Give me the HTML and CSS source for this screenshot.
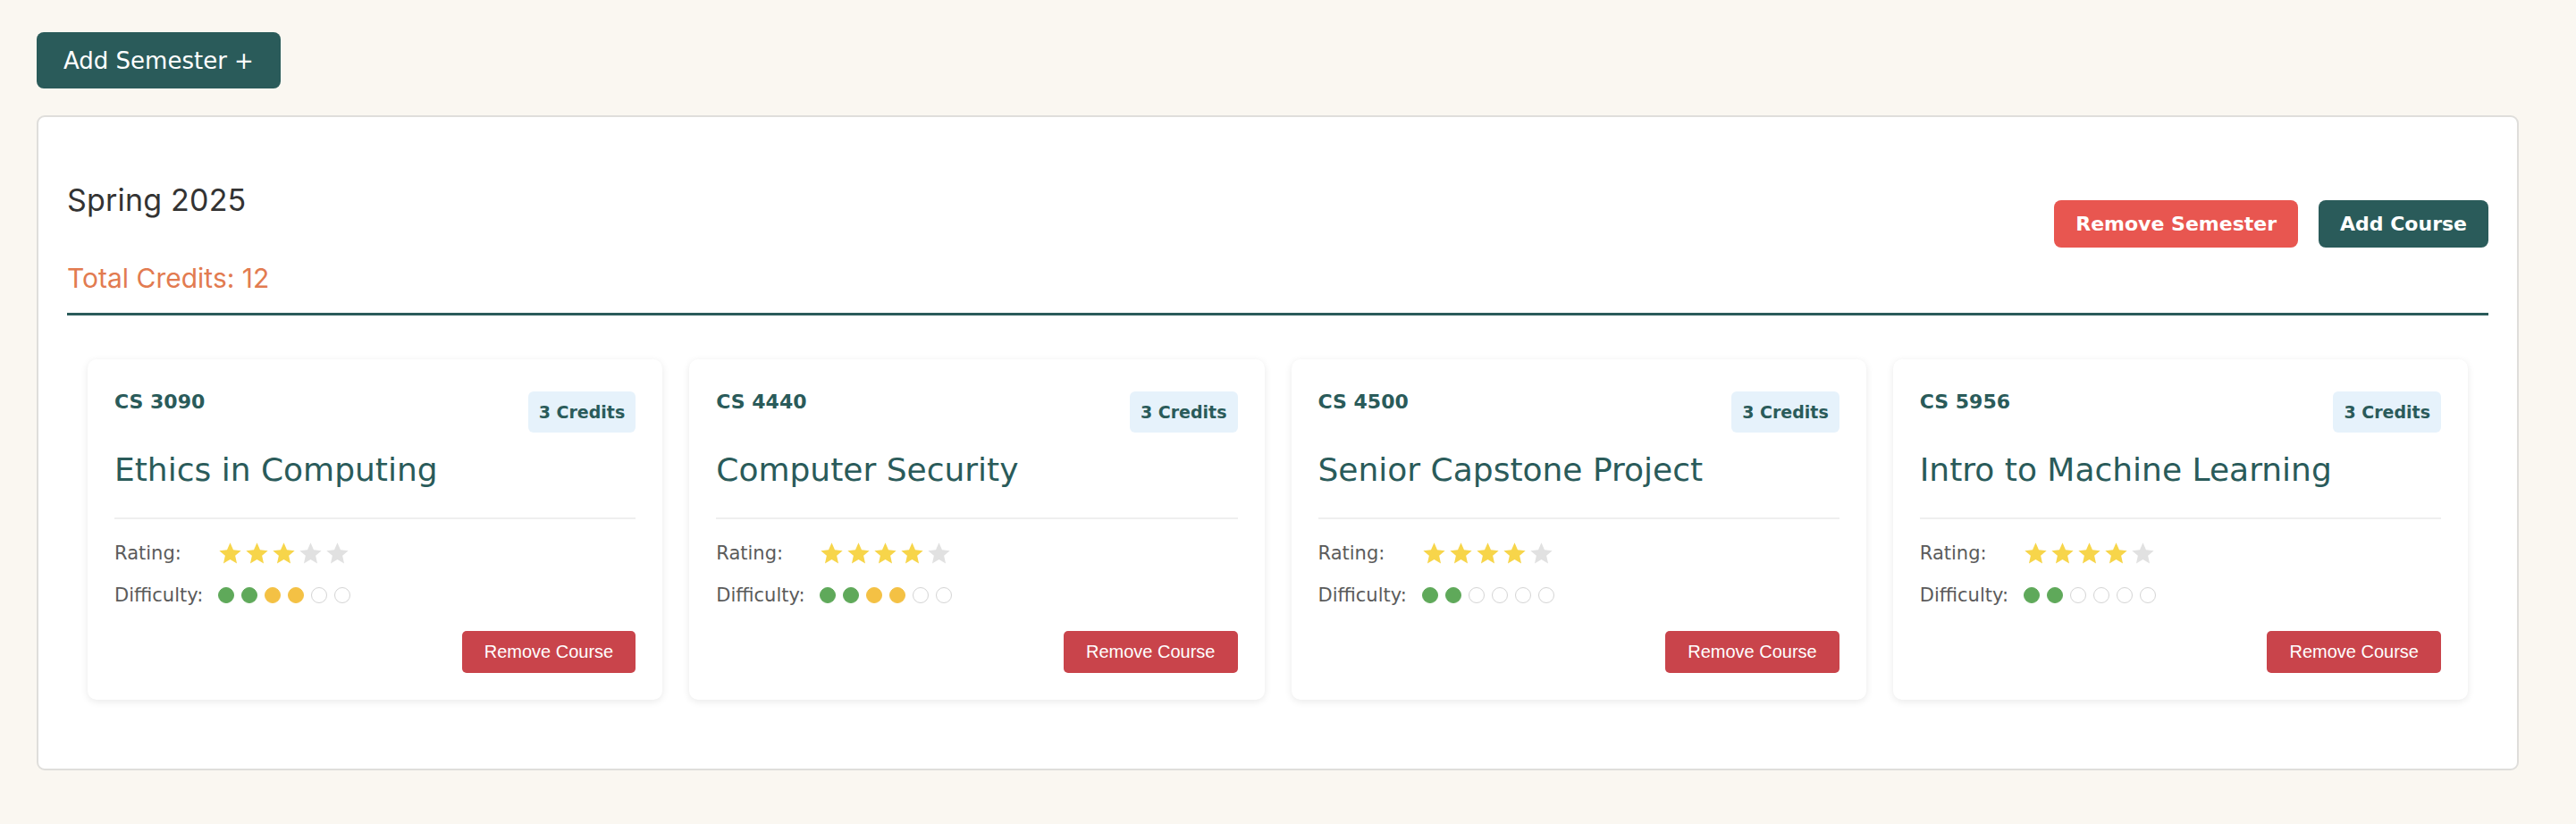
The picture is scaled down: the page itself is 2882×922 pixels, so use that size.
FILE: index.html
```html
<!DOCTYPE html>
<html lang="en">
<head>
<meta charset="utf-8">
<title>Semester Planner</title>
<link rel="stylesheet" href="styles.css">
</head>
<body>
<main class="page">
  <button class="btn-add-semester">Add Semester +</button>
  <section class="semester">
    <header class="semester-header">
      <div class="semester-info">
        <h2 class="semester-title">Spring 2025</h2>
        <p class="semester-credits">Total Credits: 12</p>
      </div>
      <div class="semester-actions">
        <button class="btn btn-danger">Remove Semester</button>
        <button class="btn btn-primary">Add Course</button>
      </div>
    </header>
    <div class="course-grid">
      <article class="course-card">
        <div class="course-head">
          <span class="course-code">CS 3090</span>
          <span class="course-badge">3 Credits</span>
        </div>
        <h3 class="course-title">Ethics in Computing</h3>
        <div class="course-meta">
          <div class="meta-row">
            <span class="meta-label">Rating:</span>
            <span class="stars">
              <svg class="star on" viewBox="0 0 24 24"><path d="M12 1.2l3.1 7.1 7.7.7-5.8 5.1 1.7 7.6L12 17.7l-6.7 4 1.7-7.6-5.8-5.1 7.7-.7z"/></svg>
              <svg class="star on" viewBox="0 0 24 24"><path d="M12 1.2l3.1 7.1 7.7.7-5.8 5.1 1.7 7.6L12 17.7l-6.7 4 1.7-7.6-5.8-5.1 7.7-.7z"/></svg>
              <svg class="star on" viewBox="0 0 24 24"><path d="M12 1.2l3.1 7.1 7.7.7-5.8 5.1 1.7 7.6L12 17.7l-6.7 4 1.7-7.6-5.8-5.1 7.7-.7z"/></svg>
              <svg class="star" viewBox="0 0 24 24"><path d="M12 1.2l3.1 7.1 7.7.7-5.8 5.1 1.7 7.6L12 17.7l-6.7 4 1.7-7.6-5.8-5.1 7.7-.7z"/></svg>
              <svg class="star" viewBox="0 0 24 24"><path d="M12 1.2l3.1 7.1 7.7.7-5.8 5.1 1.7 7.6L12 17.7l-6.7 4 1.7-7.6-5.8-5.1 7.7-.7z"/></svg>
            </span>
          </div>
          <div class="meta-row">
            <span class="meta-label">Difficulty:</span>
            <span class="dots">
              <i class="dot green"></i><i class="dot green"></i><i class="dot yellow"></i><i class="dot yellow"></i><i class="dot"></i><i class="dot"></i>
            </span>
          </div>
        </div>
        <div class="course-actions">
          <button class="btn-remove-course">Remove Course</button>
        </div>
      </article>

      <article class="course-card">
        <div class="course-head">
          <span class="course-code">CS 4440</span>
          <span class="course-badge">3 Credits</span>
        </div>
        <h3 class="course-title">Computer Security</h3>
        <div class="course-meta">
          <div class="meta-row">
            <span class="meta-label">Rating:</span>
            <span class="stars">
              <svg class="star on" viewBox="0 0 24 24"><path d="M12 1.2l3.1 7.1 7.7.7-5.8 5.1 1.7 7.6L12 17.7l-6.7 4 1.7-7.6-5.8-5.1 7.7-.7z"/></svg>
              <svg class="star on" viewBox="0 0 24 24"><path d="M12 1.2l3.1 7.1 7.7.7-5.8 5.1 1.7 7.6L12 17.7l-6.7 4 1.7-7.6-5.8-5.1 7.7-.7z"/></svg>
              <svg class="star on" viewBox="0 0 24 24"><path d="M12 1.2l3.1 7.1 7.7.7-5.8 5.1 1.7 7.6L12 17.7l-6.7 4 1.7-7.6-5.8-5.1 7.7-.7z"/></svg>
              <svg class="star on" viewBox="0 0 24 24"><path d="M12 1.2l3.1 7.1 7.7.7-5.8 5.1 1.7 7.6L12 17.7l-6.7 4 1.7-7.6-5.8-5.1 7.7-.7z"/></svg>
              <svg class="star" viewBox="0 0 24 24"><path d="M12 1.2l3.1 7.1 7.7.7-5.8 5.1 1.7 7.6L12 17.7l-6.7 4 1.7-7.6-5.8-5.1 7.7-.7z"/></svg>
            </span>
          </div>
          <div class="meta-row">
            <span class="meta-label">Difficulty:</span>
            <span class="dots">
              <i class="dot green"></i><i class="dot green"></i><i class="dot yellow"></i><i class="dot yellow"></i><i class="dot"></i><i class="dot"></i>
            </span>
          </div>
        </div>
        <div class="course-actions">
          <button class="btn-remove-course">Remove Course</button>
        </div>
      </article>

      <article class="course-card">
        <div class="course-head">
          <span class="course-code">CS 4500</span>
          <span class="course-badge">3 Credits</span>
        </div>
        <h3 class="course-title">Senior Capstone Project</h3>
        <div class="course-meta">
          <div class="meta-row">
            <span class="meta-label">Rating:</span>
            <span class="stars">
              <svg class="star on" viewBox="0 0 24 24"><path d="M12 1.2l3.1 7.1 7.7.7-5.8 5.1 1.7 7.6L12 17.7l-6.7 4 1.7-7.6-5.8-5.1 7.7-.7z"/></svg>
              <svg class="star on" viewBox="0 0 24 24"><path d="M12 1.2l3.1 7.1 7.7.7-5.8 5.1 1.7 7.6L12 17.7l-6.7 4 1.7-7.6-5.8-5.1 7.7-.7z"/></svg>
              <svg class="star on" viewBox="0 0 24 24"><path d="M12 1.2l3.1 7.1 7.7.7-5.8 5.1 1.7 7.6L12 17.7l-6.7 4 1.7-7.6-5.8-5.1 7.7-.7z"/></svg>
              <svg class="star on" viewBox="0 0 24 24"><path d="M12 1.2l3.1 7.1 7.7.7-5.8 5.1 1.7 7.6L12 17.7l-6.7 4 1.7-7.6-5.8-5.1 7.7-.7z"/></svg>
              <svg class="star" viewBox="0 0 24 24"><path d="M12 1.2l3.1 7.1 7.7.7-5.8 5.1 1.7 7.6L12 17.7l-6.7 4 1.7-7.6-5.8-5.1 7.7-.7z"/></svg>
            </span>
          </div>
          <div class="meta-row">
            <span class="meta-label">Difficulty:</span>
            <span class="dots">
              <i class="dot green"></i><i class="dot green"></i><i class="dot"></i><i class="dot"></i><i class="dot"></i><i class="dot"></i>
            </span>
          </div>
        </div>
        <div class="course-actions">
          <button class="btn-remove-course">Remove Course</button>
        </div>
      </article>

      <article class="course-card">
        <div class="course-head">
          <span class="course-code">CS 5956</span>
          <span class="course-badge">3 Credits</span>
        </div>
        <h3 class="course-title">Intro to Machine Learning</h3>
        <div class="course-meta">
          <div class="meta-row">
            <span class="meta-label">Rating:</span>
            <span class="stars">
              <svg class="star on" viewBox="0 0 24 24"><path d="M12 1.2l3.1 7.1 7.7.7-5.8 5.1 1.7 7.6L12 17.7l-6.7 4 1.7-7.6-5.8-5.1 7.7-.7z"/></svg>
              <svg class="star on" viewBox="0 0 24 24"><path d="M12 1.2l3.1 7.1 7.7.7-5.8 5.1 1.7 7.6L12 17.7l-6.7 4 1.7-7.6-5.8-5.1 7.7-.7z"/></svg>
              <svg class="star on" viewBox="0 0 24 24"><path d="M12 1.2l3.1 7.1 7.7.7-5.8 5.1 1.7 7.6L12 17.7l-6.7 4 1.7-7.6-5.8-5.1 7.7-.7z"/></svg>
              <svg class="star on" viewBox="0 0 24 24"><path d="M12 1.2l3.1 7.1 7.7.7-5.8 5.1 1.7 7.6L12 17.7l-6.7 4 1.7-7.6-5.8-5.1 7.7-.7z"/></svg>
              <svg class="star" viewBox="0 0 24 24"><path d="M12 1.2l3.1 7.1 7.7.7-5.8 5.1 1.7 7.6L12 17.7l-6.7 4 1.7-7.6-5.8-5.1 7.7-.7z"/></svg>
            </span>
          </div>
          <div class="meta-row">
            <span class="meta-label">Difficulty:</span>
            <span class="dots">
              <i class="dot green"></i><i class="dot green"></i><i class="dot"></i><i class="dot"></i><i class="dot"></i><i class="dot"></i>
            </span>
          </div>
        </div>
        <div class="course-actions">
          <button class="btn-remove-course">Remove Course</button>
        </div>
      </article>
    </div>
  </section>
</main>
</body>
</html>
```
FILE: styles.css
```css
* { box-sizing: border-box; }

html, body {
  margin: 0;
  background: #faf7f1;
}

body {
  font-family: "DejaVu Sans", "Open Sans", sans-serif;
  color: #333;
}

.page {
  padding: 36px 64px 40px 41px;
  display: flex;
  flex-direction: column;
  align-items: flex-start;
}

button {
  border: none;
  cursor: pointer;
  font-family: inherit;
}

.btn-add-semester {
  height: 63px;
  padding: 0 30px;
  background: #2a5b5a;
  color: #fff;
  font-size: 26px;
  border-radius: 8px;
  margin-bottom: 30px;
}

.semester {
  align-self: stretch;
  background: #fff;
  border: 2px solid #dfdedb;
  border-radius: 9px;
  padding: 73px 32px 77px;
}

.semester-header {
  display: flex;
  justify-content: space-between;
  align-items: flex-start;
  border-bottom: 3px solid #2a5b5a;
  padding-bottom: 21px;
}

.semester-title {
  margin: 0;
  font-family: Inter, "Liberation Sans", sans-serif;
  font-weight: 400;
  font-size: 34px;
  line-height: 40px;
  letter-spacing: 0.2px;
  color: #333;
}

.semester-credits {
  margin: 49px 0 0;
  font-family: Inter, "Liberation Sans", sans-serif;
  font-size: 30px;
  line-height: 36px;
  color: #e27b50;
}

.semester-actions {
  display: flex;
  gap: 23px;
  margin-top: 20px;
}

.btn {
  height: 53px;
  padding: 0 24px;
  border-radius: 8px;
  color: #fff;
  font-weight: 700;
  font-size: 22px;
}

.btn-danger { background: #e85650; }
.btn-primary { background: #2a5b5a; }

.course-grid {
  display: grid;
  grid-template-columns: repeat(4, 1fr);
  gap: 30px;
  padding: 0 23px;
  margin-top: 49px;
}

.course-card {
  background: #fff;
  border-radius: 10px;
  box-shadow: 0 2px 8px rgba(0, 0, 0, 0.09);
  padding: 34px 30px 30px;
  display: flex;
  flex-direction: column;
}

.course-head {
  display: flex;
  justify-content: space-between;
  align-items: flex-start;
}

.course-code {
  font-weight: 700;
  font-size: 22px;
  line-height: 28px;
  color: #2a5b5a;
}

.course-badge {
  margin-top: 2px;
  background: #e6f2fb;
  color: #2a5b5a;
  font-weight: 700;
  font-size: 19px;
  line-height: 46px;
  padding: 0 12px;
  border-radius: 6px;
}

.course-title {
  margin: 20px 0 0;
  padding-bottom: 31px;
  border-bottom: 2px solid #efefef;
  font-weight: 400;
  font-size: 36px;
  line-height: 44px;
  color: #2a5b5a;
}

.course-meta {
  display: flex;
  flex-direction: column;
  gap: 17px;
  margin-top: 23px;
}

.meta-row {
  display: flex;
  align-items: center;
  height: 30px;
}

.meta-label {
  flex: 0 0 116px;
  font-size: 21px;
  color: #5b5b5b;
  white-space: nowrap;
}

.stars {
  display: flex;
  gap: 3px;
}

.star {
  width: 27px;
  height: 27px;
  fill: #e1e1e1;
}

.star.on { fill: #f7d54a; }

.dots {
  display: flex;
  gap: 8px;
}

.dot {
  width: 18px;
  height: 18px;
  border-radius: 50%;
  border: 1px solid #d4d4d4;
  background: #fff;
}

.dot.green { background: #5fa95a; border-color: #5fa95a; }
.dot.yellow { background: #f4c144; border-color: #f4c144; }

.course-actions {
  display: flex;
  justify-content: flex-end;
  margin-top: 25px;
}

.btn-remove-course {
  height: 47px;
  padding: 0 25px;
  background: #c9444b;
  color: #fff;
  font-family: "Liberation Sans", Arial, sans-serif;
  font-size: 20px;
  border-radius: 5px;
}
```
